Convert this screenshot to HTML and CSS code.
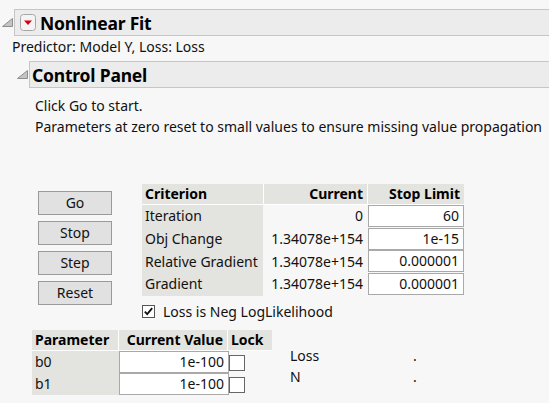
FILE: index.html
```html
<!DOCTYPE html>
<html>
<head>
<meta charset="utf-8">
<link rel="stylesheet" href="styles.css">
</head>
<body>
<div class="report">
  <div class="outline-row top-row">
    <span class="disc-cell">
      <svg class="disc" width="11" height="9" viewBox="0 0 11 9"><path d="M0.5 8.5 L10.5 8.5 L10.5 0.5 Z" fill="#c4c4c4" stroke="#8e8e8e" stroke-width="1" stroke-linejoin="miter"/></svg>
    </span>
    <div class="hdr hdr-top">
      <span class="redbtn"><svg width="16" height="17" viewBox="0 0 16 17"><rect x="0.5" y="0.5" width="15" height="16" rx="3" fill="#f4f4f4" stroke="#a6a6a6"/><path d="M4 6.5 L12 6.5 L8 11 Z" fill="#d7000f"/></svg></span>
      <span class="title">Nonlinear Fit</span>
    </div>
  </div>
  <div class="subtitle">Predictor: Model Y, Loss: Loss</div>

  <div class="outline-row cp-row">
    <span class="disc-cell">
      <svg class="disc" width="11" height="9" viewBox="0 0 11 9"><path d="M0.5 8.5 L10.5 8.5 L10.5 0.5 Z" fill="#c4c4c4" stroke="#8e8e8e" stroke-width="1"/></svg>
    </span>
    <div class="hdr hdr-cp">
      <span class="title">Control Panel</span>
    </div>
  </div>

  <div class="cp-body">
    <p class="msg first">Click Go to start.</p>
    <p class="msg">Parameters at zero reset to small values to ensure missing value propagation</p>

    <div class="controls">
      <div class="buttons">
        <div class="btn">Go</div>
        <div class="btn">Stop</div>
        <div class="btn">Step</div>
        <div class="btn">Reset</div>
      </div>
      <div class="right-col">
        <table class="crit">
          <thead>
            <tr><th class="c1">Criterion</th><th class="c2">Current</th><th class="c3">Stop Limit</th></tr>
          </thead>
          <tbody>
            <tr><td class="c1">Iteration</td><td class="c2">0</td><td class="c3"><div class="inp">60</div></td></tr>
            <tr><td class="c1">Obj Change</td><td class="c2">1.34078e+154</td><td class="c3"><div class="inp">1e-15</div></td></tr>
            <tr><td class="c1">Relative Gradient</td><td class="c2">1.34078e+154</td><td class="c3"><div class="inp">0.000001</div></td></tr>
            <tr><td class="c1">Gradient</td><td class="c2">1.34078e+154</td><td class="c3"><div class="inp">0.000001</div></td></tr>
          </tbody>
        </table>
        <div class="chk-row">
          <span class="chk"><svg width="13" height="13" viewBox="0 0 13 13"><rect x="0.5" y="0.5" width="12" height="12" fill="#fff" stroke="#555"/><path d="M2.8 6.6 L5.2 9.2 L10.2 3.2" fill="none" stroke="#111" stroke-width="1.8"/></svg></span>
          <span class="chk-label">Loss is Neg LogLikelihood</span>
        </div>
      </div>
    </div>

    <div class="params-row">
      <table class="params">
        <thead>
          <tr><th class="p1">Parameter</th><th class="p2">Current Value</th><th class="p3">Lock</th></tr>
        </thead>
        <tbody>
          <tr><td class="p1">b0</td><td class="p2"><div class="pinp">1e-100</div></td><td class="p3"><span class="lockbox"></span></td></tr>
          <tr><td class="p1">b1</td><td class="p2"><div class="pinp">1e-100</div></td><td class="p3"><span class="lockbox"></span></td></tr>
        </tbody>
      </table>
      <div class="stats">
        <div class="stat"><span class="stat-name">Loss</span><span class="stat-val">.</span></div>
        <div class="stat"><span class="stat-name">N</span><span class="stat-val">.</span></div>
      </div>
    </div>
  </div>
</div>
</body>
</html>
```

FILE: styles.css
```css
html, body {
  margin: 0;
  padding: 0;
  background: #f7f7f7;
  overflow: hidden;
}
body {
  font-family: "Noto Sans", "Open Sans", sans-serif;
  font-size: 14px;
  color: #111;
  width: 549px;
  height: 403px;
}
.report {
  display: flex;
  flex-direction: column;
}
.outline-row {
  display: flex;
  align-items: center;
}
.top-row {
  margin-top: 9px;
  padding-left: 2px;
}
.cp-row {
  margin-top: 4px;
  padding-left: 17px;
}
.disc-cell {
  width: 12px;
  display: flex;
  align-items: center;
}
.disc { display: block; }
.hdr {
  flex: 1;
  height: 25px;
  background: #ececec;
  border-top: 1px solid #c6c6c6;
  border-bottom: 1px solid #c6c6c6;
  border-left: 1px solid #c6c6c6;
  display: flex;
  align-items: center;
}
.hdr-top { padding-left: 5px; }
.hdr-cp { padding-left: 2px; }
.redbtn {
  display: flex;
  margin-right: 4px;
}
.title {
  font-weight: 700;
  font-size: 17.5px;
  color: #000;
  letter-spacing: -0.2px;
}
.subtitle {
  padding-left: 12px;
  height: 20px;
  line-height: 20px;
  margin-top: 1px;
}
.cp-body {
  padding-left: 32px;
  display: flex;
  flex-direction: column;
}
.msg {
  margin: 0;
  padding-left: 3px;
  line-height: 21px;
  height: 21px;
  white-space: nowrap;
}
.msg.first { margin-top: 7px; }
.controls {
  display: flex;
  margin-top: 47px;
  padding-left: 6px;
  gap: 30px;
}
.buttons {
  display: flex;
  flex-direction: column;
  gap: 6px;
  margin-top: 7px;
}
.btn {
  width: 72px;
  height: 22px;
  line-height: 22px;
  text-align: center;
  background: #e1e1e1;
  border: 1px solid #9a9a9a;
}
.right-col {
  display: flex;
  flex-direction: column;
}
table {
  border-collapse: separate;
  border-spacing: 0;
  font-size: 14px;
}
th {
  font-weight: 700;
  background: #e3e3df;
  height: 20px;
  line-height: 20px;
  padding: 0;
  border-bottom: 1px solid #fff;
  color: #000;
}
td { padding: 0; line-height: 20px; }
.crit .c1 {
  width: 118px;
  padding-left: 3px;
  text-align: left;
  white-space: nowrap;
}
.crit th.c2 {
  width: 99px;
  padding-right: 4px;
  border-left: 1px solid #fff;
  border-right: 1px solid #fff;
  text-align: right;
}
.crit td.c2 {
  text-align: right;
  padding-right: 5px;
  padding-left: 1px;
}
.crit th.c3 {
  width: 92px;
  padding-right: 4px;
  text-align: right;
}
.crit td.c1 { background: #e3e3df; }
.crit tbody tr { height: 22.7px; }
.crit td.c3 { vertical-align: top; }
.inp {
  height: 20px;
  line-height: 20px;
  background: #fff;
  border: 1px solid #a9a9a9;
  text-align: right;
  padding-right: 4px;
  width: 90px;
}
.chk-row {
  display: flex;
  align-items: center;
  margin-top: 7px;
  gap: 8px;
}
.chk { display: flex; }
.chk-label { line-height: 18px; }
.params-row {
  display: flex;
  margin-top: 9px;
  gap: 18px;
}
.params .p1 {
  width: 83px;
  padding-left: 3px;
  text-align: left;
}
.params th.p1 { border-right: 1px solid #fff; }
.params td.p1 { background: #e3e3df; border-right: 1px solid #e3e3df; }
.params th.p2 {
  width: 104px;
  text-align: right;
  padding-right: 4px;
  border-right: 1px solid #fff;
}
.params th.p3 {
  width: 41px;
  text-align: left;
  padding-left: 3px;
}
.params tbody tr { height: 22px; }
.params td.p2 { vertical-align: top; }
.pinp {
  height: 20px;
  line-height: 20px;
  background: #fff;
  border: 1px solid #a9a9a9;
  text-align: right;
  padding-right: 4px;
  margin-right: -1px;
}
.params td.p3 { vertical-align: top; padding-left: 1px; }
.lockbox {
  display: block;
  width: 14px;
  height: 14px;
  margin-top: 4px;
  background: #fff;
  border: 1px solid #666;
}
.stats {
  margin-top: 15px;
  display: flex;
  flex-direction: column;
}
.stat {
  display: flex;
  line-height: 21px;
  height: 21px;
}
.stat-name { width: 123px; }
```
